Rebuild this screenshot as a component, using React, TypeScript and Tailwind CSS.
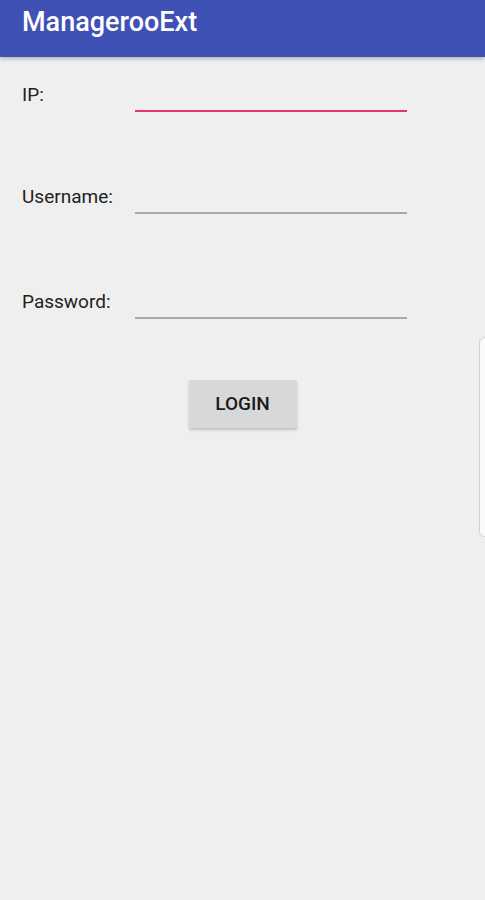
import React, { useState } from 'react';

const Field: React.FC<{ label: string; type?: string; focused?: boolean; className?: string }> = ({ label, type = 'text', focused, className }) => {
  const [value, setValue] = useState('');
  return (
    <div className={`flex items-end ${className ?? ''}`}>
      <label className="w-[113px] mb-[5px] text-[19px] leading-[24px] text-[#222222]">{label}</label>
      <input
        type={type}
        value={value}
        onChange={(e) => setValue(e.target.value)}
        className={`w-[272px] h-[40px] bg-transparent outline-none border-b-2 text-[18px] ${focused ? 'border-[#e5337a]' : 'border-[#a8a8a8]'}`}
      />
    </div>
  );
};

const App: React.FC = () => {
  return (
    <div className="relative w-[485px] h-[900px] bg-[#efefef] overflow-hidden font-['Roboto',sans-serif]">
      <header className="relative z-10 h-[57px] bg-[#3f51b5] pl-[22px] pt-[9px] shadow-[0_2px_4px_rgba(0,0,0,0.25)]">
        <h1 className="text-white text-[27px] font-medium leading-none">ManagerooExt</h1>
      </header>

      <div className="pl-[22px] flex flex-col">
        <Field label="IP:" focused className="mt-[15px]" />
        <Field label="Username:" className="mt-[62px]" />
        <Field label="Password:" type="password" className="mt-[65px]" />
        <div className="flex justify-center mt-[61px] pr-[22px]">
          <button className="w-[108px] h-[48px] rounded-[2px] bg-[#d7d8d8] text-[19px] font-medium text-[#1a1a1a] shadow-[0_2px_3px_rgba(0,0,0,0.2)]">
            LOGIN
          </button>
        </div>
      </div>

      {/* edge panel handle */}
      <div className="absolute left-[479px] top-[337px] w-[10px] h-[200px] rounded-l-[6px] bg-[#fafafa] border border-[#cfcfcf]" />
    </div>
  );
};

export default App;
